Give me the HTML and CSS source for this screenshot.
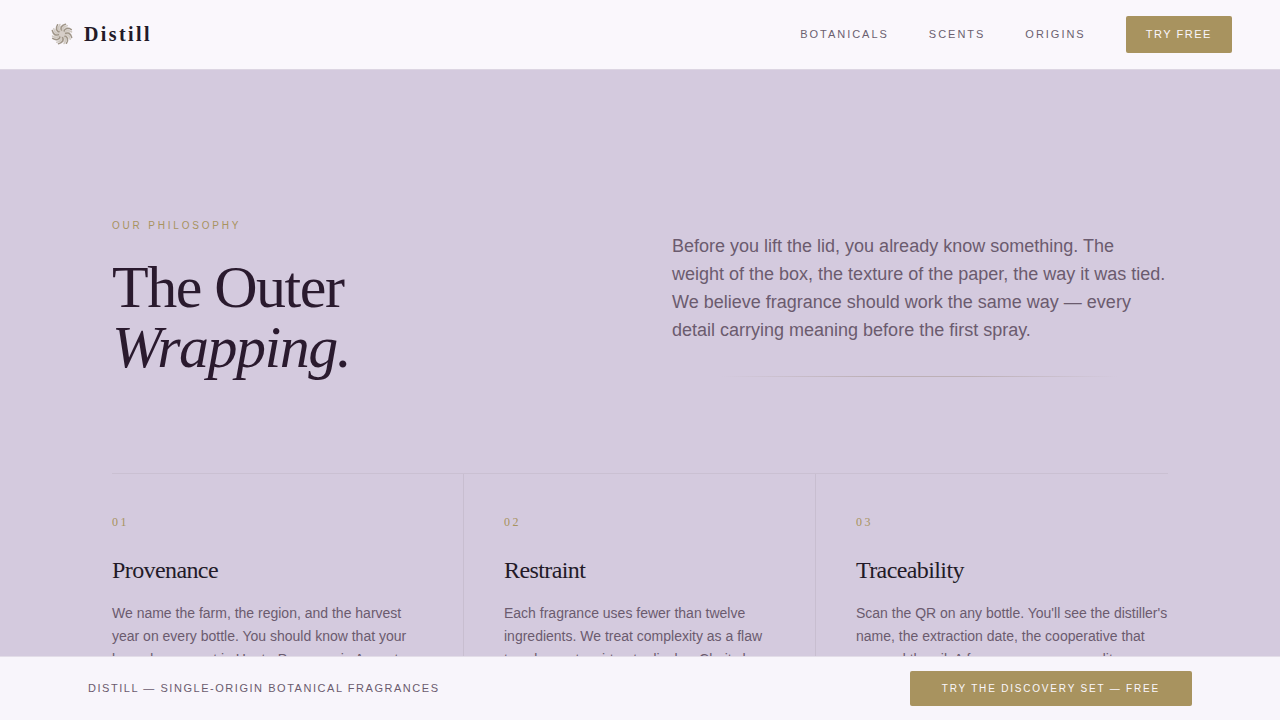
FILE: index.html
```html
<!DOCTYPE html>
<html lang="en">
<head>
    <meta charset="UTF-8">
    <meta name="viewport" content="width=device-width, initial-scale=1.0">
    <title>Distill</title>
    <link rel="stylesheet" href="styles.css">
</head>
<body>
    <header class="header">
        <a href="#" class="logo">
            <svg class="logo-mark" viewBox="0 0 28 29" aria-hidden="true">
                <defs>
                    <g id="petal" fill="none" stroke-linecap="round">
                        <path d="M14 11.500C11.800 8.500 13 5.300 17.500 4.300" stroke="#a09689" stroke-width="1.500"/>
                        <path d="M15.300 11C14 8.300 15.500 6.200 19.300 5.800" stroke="#cfc8c0" stroke-width="1.500"/>
                    </g>
                </defs>
                <circle cx="14" cy="14" r="8.500" fill="#ddd7d2"/>
                <use href="#petal"/>
                <use href="#petal" transform="rotate(45 14 14)"/>
                <use href="#petal" transform="rotate(90 14 14)"/>
                <use href="#petal" transform="rotate(135 14 14)"/>
                <use href="#petal" transform="rotate(180 14 14)"/>
                <use href="#petal" transform="rotate(225 14 14)"/>
                <use href="#petal" transform="rotate(270 14 14)"/>
                <use href="#petal" transform="rotate(315 14 14)"/>
                <circle cx="14" cy="14" r="3" fill="#d6cec8"/>
            </svg>
            <span>Distill</span>
        </a>
        <nav class="nav">
            <a href="#botanicals">Botanicals</a>
            <a href="#scents">Scents</a>
            <a href="#origins">Origins</a>
            <button type="button" class="btn">Try Free</button>
        </nav>
    </header>

    <main class="philosophy">
        <div class="intro">
            <div>
                <p class="eyebrow">Our Philosophy</p>
                <h1>The Outer<br><em>Wrapping.</em></h1>
            </div>
            <div class="intro-text">
                <p>Before you lift the lid, you already know something. The weight of the box, the texture of the paper, the way it was tied. We believe fragrance should work the same way — every detail carrying meaning before the first spray.</p>
                <div class="divider"></div>
            </div>
        </div>

        <div class="pillars">
            <article class="pillar">
                <p class="number">01</p>
                <h2>Provenance</h2>
                <p class="text">We name the farm, the region, and the harvest year on every bottle. You should know that your lavender was cut in Haute-Provence in August.</p>
            </article>
            <article class="pillar">
                <p class="number">02</p>
                <h2>Restraint</h2>
                <p class="text">Each fragrance uses fewer than twelve ingredients. We treat complexity as a flaw to solve, not a virtue to display. Clarity has its own depth.</p>
            </article>
            <article class="pillar">
                <p class="number">03</p>
                <h2>Traceability</h2>
                <p class="text">Scan the QR on any bottle. You'll see the distiller's name, the extraction date, the cooperative that pressed the oil. A fragrance you can audit.</p>
            </article>
        </div>
    </main>

    <div class="bottom-bar">
        <p>Distill — Single-Origin Botanical Fragrances</p>
        <button type="button" class="btn btn-wide">Try the Discovery Set — Free</button>
    </div>
</body>
</html>
```
FILE: styles.css
```css
* {
    box-sizing: border-box;
    margin: 0;
    padding: 0;
}
body {
    font-family: "Liberation Sans", Arial, sans-serif;
    background: #d4cade;
    color: #6b5b6e;
}
.header {
    position: sticky;
    top: 0;
    z-index: 10;
    display: flex;
    justify-content: space-between;
    align-items: center;
    padding: 16px 48px;
    background: #faf7fc;
    border-bottom: 1px solid #dcd5e2;
}
.logo {
    display: flex;
    align-items: center;
    gap: 8px;
    font-family: "Liberation Serif", "Times New Roman", serif;
    font-size: 20px;
    font-weight: bold;
    letter-spacing: 0.12em;
    color: #231a28;
    text-decoration: none;
}
.logo-mark {
    width: 28px;
    height: 29px;
}
.nav {
    display: flex;
    align-items: center;
    gap: 40px;
}
.nav a {
    font-size: 11px;
    line-height: 17px;
    letter-spacing: 0.18em;
    text-transform: uppercase;
    text-decoration: none;
    color: #6b5f70;
}
.btn {
    padding: 12px 20px;
    border: none;
    border-radius: 2px;
    background: #a8935f;
    color: #faf7fc;
    font-family: inherit;
    font-size: 11px;
    line-height: 13px;
    letter-spacing: 0.14em;
    text-transform: uppercase;
    cursor: pointer;
}
.philosophy {
    max-width: 1152px;
    margin: 0 auto;
    padding: 148px 48px;
}
.intro {
    display: grid;
    grid-template-columns: 1fr 1fr;
    gap: 64px;
    align-items: end;
    margin-bottom: 96px;
}
.eyebrow {
    margin-bottom: 24px;
    font-size: 10px;
    line-height: 15px;
    letter-spacing: 0.28em;
    text-transform: uppercase;
    color: #a8935f;
}
h1 {
    font-family: "Liberation Serif", "Times New Roman", serif;
    font-size: 60px;
    font-weight: normal;
    line-height: 60px;
    letter-spacing: -0.025em;
    color: #2a1a2e;
}
.intro-text {
    font-size: 18px;
    line-height: 28px;
}
.divider {
    height: 1px;
    margin-top: 32px;
    background: linear-gradient(90deg, transparent 10%, #bdb0b6 40%, #bdb0b6 60%, transparent 90%);
}
.pillars {
    display: grid;
    grid-template-columns: repeat(3, 1fr);
    border-top: 1px solid #cac0d2;
}
.pillar {
    padding: 40px;
    border-right: 1px solid #c8bed0;
}
.pillar:first-child {
    padding-left: 0;
}
.pillar:last-child {
    padding-right: 0;
    border-right: none;
}
.number {
    margin-bottom: 24px;
    font-family: "Liberation Serif", "Times New Roman", serif;
    font-size: 12px;
    line-height: 16px;
    letter-spacing: 0.2em;
    color: #a8935f;
}
h2 {
    margin-bottom: 16px;
    font-family: "Liberation Serif", "Times New Roman", serif;
    font-size: 24px;
    font-weight: normal;
    line-height: 32px;
    letter-spacing: -0.025em;
    color: #231a28;
}
.text {
    font-size: 14px;
    line-height: 23px;
}
.bottom-bar {
    position: fixed;
    left: 0;
    right: 0;
    bottom: 0;
    z-index: 10;
    display: flex;
    justify-content: space-between;
    align-items: center;
    padding: 14px 88px;
    background: #f8f5fb;
    border-top: 1px solid #e3dde8;
}
.bottom-bar p {
    font-size: 11px;
    line-height: 17px;
    letter-spacing: 0.14em;
    text-transform: uppercase;
}
.btn-wide {
    padding: 11px 32px;
    font-size: 10px;
    letter-spacing: 0.18em;
}
```
